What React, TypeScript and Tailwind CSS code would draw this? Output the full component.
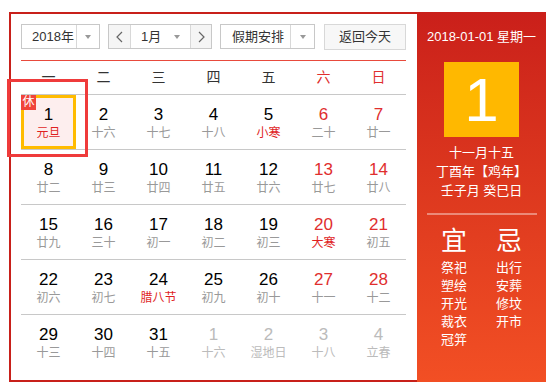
import React from 'react'

interface Day {
  d: number
  lunar: string
  fest?: boolean
  other?: boolean
}

const rows: Day[][] = [
  [
    { d: 1, lunar: '元旦', fest: true },
    { d: 2, lunar: '十六' },
    { d: 3, lunar: '十七' },
    { d: 4, lunar: '十八' },
    { d: 5, lunar: '小寒', fest: true },
    { d: 6, lunar: '二十' },
    { d: 7, lunar: '廿一' },
  ],
  [
    { d: 8, lunar: '廿二' },
    { d: 9, lunar: '廿三' },
    { d: 10, lunar: '廿四' },
    { d: 11, lunar: '廿五' },
    { d: 12, lunar: '廿六' },
    { d: 13, lunar: '廿七' },
    { d: 14, lunar: '廿八' },
  ],
  [
    { d: 15, lunar: '廿九' },
    { d: 16, lunar: '三十' },
    { d: 17, lunar: '初一' },
    { d: 18, lunar: '初二' },
    { d: 19, lunar: '初三' },
    { d: 20, lunar: '大寒', fest: true },
    { d: 21, lunar: '初五' },
  ],
  [
    { d: 22, lunar: '初六' },
    { d: 23, lunar: '初七' },
    { d: 24, lunar: '腊八节', fest: true },
    { d: 25, lunar: '初九' },
    { d: 26, lunar: '初十' },
    { d: 27, lunar: '十一' },
    { d: 28, lunar: '十二' },
  ],
  [
    { d: 29, lunar: '十三' },
    { d: 30, lunar: '十四' },
    { d: 31, lunar: '十五' },
    { d: 1, lunar: '十六', other: true },
    { d: 2, lunar: '湿地日', other: true },
    { d: 3, lunar: '十八', other: true },
    { d: 4, lunar: '立春', other: true },
  ],
]

const weekdays = ['一', '二', '三', '四', '五', '六', '日']

const Caret = () => (
  <span className="w-0 h-0 border-x-[3.5px] border-x-transparent border-t-[4px] border-t-[#999]" />
)

const Chevron = ({ dir }: { dir: 'left' | 'right' }) => (
  <svg width="7" height="12" viewBox="0 0 7 12">
    <polyline
      points={dir === 'left' ? '6,1 1,6 6,11' : '1,1 6,6 1,11'}
      fill="none"
      stroke="#666"
      strokeWidth="1.2"
    />
  </svg>
)

function DayCell({ day, col, selected }: { day: Day; col: number; selected?: boolean }) {
  const weekend = col >= 5
  const numColor = day.other ? 'text-[#bbb]' : weekend ? 'text-[#e02e2e]' : 'text-black'
  const lunarColor = day.other ? 'text-[#bbb]' : day.fest ? 'text-[#e01f1f]' : 'text-[#999]'
  return (
    <div
      className={`relative flex flex-col items-center h-[54px] ${
        selected ? 'border-[3px] border-[#ffbb00] bg-[#fdeeee] pt-[7px]' : 'pt-[10px]'
      }`}
    >
      {selected && (
        <span className="absolute -left-[3px] -top-[3px] w-[15px] h-[15px] bg-[#f0443a] text-white text-[12px] leading-[15px] text-center">
          休
        </span>
      )}
      <span className={`text-[17px] leading-[20px] ${numColor}`}>{day.d}</span>
      <span className={`text-[12px] leading-[14px] mt-[1px] ${lunarColor}`}>{day.lunar}</span>
    </div>
  )
}

export default function App() {
  return (
    <div className="relative w-[546px] h-[384px] bg-white overflow-hidden font-['Liberation_Sans','Noto_Sans_CJK_SC',sans-serif]">
      <div className="pt-[12px] pl-[9px]">
        <div className="flex h-[370px]">
          {/* Calendar */}
          <div className="w-[408px] border-l-2 border-t-2 border-b-2 border-[#c8201a] pl-[10px] pr-[11px] pt-[10px]">
            {/* Controls */}
            <div className="flex items-start h-[26px] text-[13px] text-[#333]">
              <div className="flex w-[79px] h-[25px] border border-[#c8c8c8]">
                <span className="flex-1 pl-[10px] leading-[23px]">2018年</span>
                <span className="w-[23px] border-l border-[#d8d8d8] flex items-center justify-center">
                  <Caret />
                </span>
              </div>
              <div className="flex w-[104px] h-[25px] border border-[#c8c8c8] ml-[8px]">
                <span className="w-[22px] bg-[#f5f5f5] border-r border-[#d8d8d8] flex items-center justify-center">
                  <Chevron dir="left" />
                </span>
                <span className="flex-1 flex items-center pl-[10px] pr-[10px]">
                  <span className="flex-1 leading-[23px]">1月</span>
                  <Caret />
                </span>
                <span className="w-[21px] bg-[#f5f5f5] border-l border-[#d8d8d8] flex items-center justify-center">
                  <Chevron dir="right" />
                </span>
              </div>
              <div className="flex w-[95px] h-[25px] border border-[#c8c8c8] ml-[8px]">
                <span className="flex-1 pl-[11px] leading-[23px]">假期安排</span>
                <span className="w-[24px] border-l border-[#d8d8d8] flex items-center justify-center">
                  <Caret />
                </span>
              </div>
              <button className="w-[82px] h-[26px] ml-[9px] bg-[#f7f7f7] border border-[#d8d8d8] text-[13px] text-[#333] leading-[24px]">
                返回今天
              </button>
            </div>

            <div className="mt-[10px] h-px bg-[#e84a3c]" />

            {/* Weekdays */}
            <div className="grid grid-cols-7 h-[34px] border-b border-[#c8c8c8] items-center">
              {weekdays.map((w, i) => (
                <span
                  key={w}
                  className={`text-center text-[14px] ${i >= 5 ? 'text-[#e02e2e]' : 'text-[#333]'}`}
                >
                  {w}
                </span>
              ))}
            </div>

            {/* Days */}
            {rows.map((row, r) => (
              <div
                key={r}
                className={`grid grid-cols-7 h-[55px] ${r < rows.length - 1 ? 'border-b border-[#c8c8c8]' : ''}`}
              >
                {row.map((day, c) => (
                  <DayCell key={c} day={day} col={c} selected={r === 0 && c === 0} />
                ))}
              </div>
            ))}
          </div>

          {/* Side panel */}
          <div className="flex-1 bg-gradient-to-b from-[#ca1f1a] to-[#f24f24] text-white flex flex-col items-center pt-[16px]">
            <div className="text-[13px] leading-[18px]">2018-01-01 星期一</div>
            <div className="mt-[16px] w-[75px] h-[75px] bg-[#ffb800] flex items-center justify-center text-[62px] leading-none">
              1
            </div>
            <div className="mt-[6px] text-[13px] leading-[19px] text-center">
              <div>十一月十五</div>
              <div>丁酉年【鸡年】</div>
              <div>壬子月 癸巳日</div>
            </div>
            <div className="mt-[13px] w-[110px] h-[2px] bg-white/40" />
            <div className="mt-[11px] w-[110px] grid grid-cols-2">
              <div className="flex flex-col items-center">
                <span className="text-[26px] leading-[30px]">宜</span>
                <div className="mt-[3px] text-[13px] leading-[18px] text-center">
                  <div>祭祀</div>
                  <div>塑绘</div>
                  <div>开光</div>
                  <div>裁衣</div>
                  <div>冠笄</div>
                </div>
              </div>
              <div className="flex flex-col items-center">
                <span className="text-[26px] leading-[30px]">忌</span>
                <div className="mt-[3px] text-[13px] leading-[18px] text-center">
                  <div>出行</div>
                  <div>安葬</div>
                  <div>修坟</div>
                  <div>开市</div>
                </div>
              </div>
            </div>
          </div>
        </div>
      </div>

      {/* highlight marker */}
      <div className="absolute left-[7px] top-[79px] w-[81px] h-[78px] border-[3px] border-[#ef3b3b]" />
    </div>
  )
}
